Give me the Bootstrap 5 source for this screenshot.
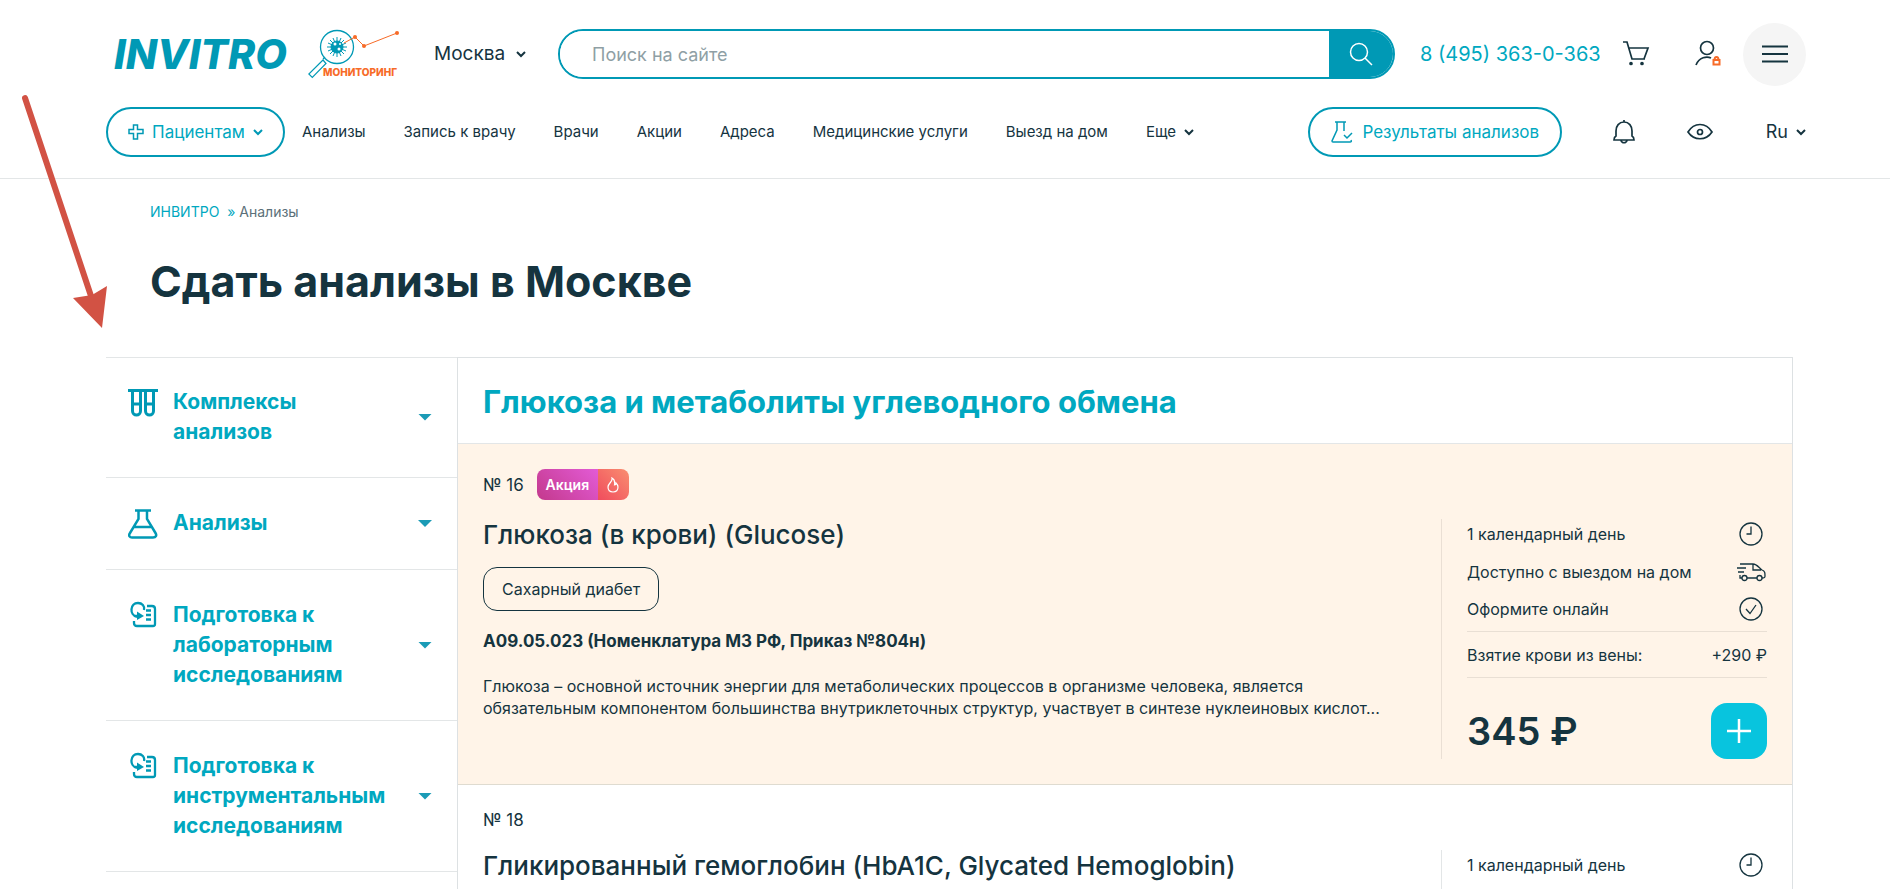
<!DOCTYPE html>
<html lang="ru">
<head>
<meta charset="utf-8">
<meta name="viewport" content="width=device-width, initial-scale=1">
<title>Сдать анализы в Москве</title>
<link rel="stylesheet" href="https://cdn.jsdelivr.net/npm/bootstrap@5.3.0/dist/css/bootstrap.min.css">
<style>
:root{--ink:#15343f;--teal:#00a8c0;--deep:#0099b5;--line:#e3e6e7}
body{font-family:Inter,"Liberation Sans",sans-serif;font-size:16px;line-height:22px;color:var(--ink);background:#fff}
a{color:inherit;text-decoration:none}
button{color:inherit}
svg{display:block;flex:none;fill:none;stroke:currentColor}
.teal{color:var(--teal)}
.page-header{padding:22px 84px 20px 106px;border-bottom:1px solid var(--line)}
.top-row{height:64px}
.menu-row{height:52px;margin-top:20px;font-size:15px}
.logo-word{font-size:41px;line-height:42px;font-weight:800;font-style:italic;color:var(--deep);width:180px;margin-left:8px;white-space:nowrap}
.monitoring{margin-left:14px}
.monitoring text{font-size:10px;font-weight:800;fill:#f76b28;stroke:none}
.city{font-size:19px;margin-left:30px;width:92px}
.search{height:50px;border:2px solid var(--deep);border-radius:25px;overflow:hidden;margin-left:32px}
.search input{border:0;padding:0 32px;font-size:18px;color:var(--ink);border-radius:0;box-shadow:none}
.search input::placeholder{color:#8f9fa5}
.search button{width:64px;border:0;background:var(--deep);color:#fff}
.phone{font-size:20px;margin-left:25px;width:178px;white-space:nowrap}
.plain-btn{border:0;background:none;padding:0}
.account{margin:0 21px 0 44px}
.burger{width:63px;height:63px;border-radius:50%;background:#f5f5f5;color:var(--ink)}
.pill{height:50px;border:2px solid var(--deep);border-radius:25px;background:#fff;color:var(--teal);font-size:17px;white-space:nowrap}
.pill svg{color:var(--deep)}
.for-patients{width:179px}
.results{width:254px}
.menu-links{gap:38px;margin-left:17px;white-space:nowrap}
.lang{font-size:18px;margin-left:52px}
.crumbs{font-size:14px;padding:22px 0 0 150px;color:#5b7079}
.page-title{font-size:43px;line-height:56px;font-weight:700;margin:30px 0 48px 150px}
.catalog{display:grid;grid-template-columns:351px minmax(0,1fr);margin:0 97px 0 106px}
.side-link{display:flex;align-items:flex-start;border-top:1px solid var(--line);padding:30px 25px 30px 22px;font-size:21px;line-height:30px;font-weight:700;color:var(--teal)}
.side-link:first-child{padding-top:29px}
.side-link:last-child{border-bottom:1px solid var(--line)}
.side-link svg{color:var(--deep);margin-top:1px}
.side-link span{width:220px;margin-left:15px}
.tri{align-self:center;margin-left:auto;width:14px;height:7px;background:#1b9bb6;clip-path:polygon(0 0,100% 0,50% 100%)}
.panel{border:1px solid #dde1e3;border-bottom:0}
.panel-title{font-size:31px;line-height:40px;font-weight:700;color:var(--teal);padding:24px 25px 21px;margin:0;border-bottom:1px solid var(--line)}
.test-row{padding:25px;border-bottom:1px solid #dfdbd0}
.promo{background:#fff4e8}
.num-line{font-size:17px}
.tag{height:31px;border-radius:8px;overflow:hidden;color:#fff;font-size:14px;font-weight:600;margin-left:13px}
.tag span{background:linear-gradient(45deg,#c3398c,#e35bd6);width:61px}
.tag i{background:linear-gradient(45deg,#f04c5d,#f98e70);width:31px}
.test-body{display:grid;grid-template-columns:minmax(0,1fr) 326px;margin-top:19px;column-gap:32px}
.test-name{font-size:26px;line-height:32px;font-weight:500;margin:0}
.chip{height:44px;border:1px solid var(--ink);border-radius:14px;background:none;padding:0 18px;font-size:16px;margin-top:16px}
.code{font-size:17px;font-weight:700;margin:19px 0 23px}
.descr{margin:0}
.facts{border-left:1px solid #eadfd4;padding-left:25px;min-height:240px}
.fact{height:37px}
.facts .fact:first-child{height:30px;margin-bottom:4px}
.sampling{height:47px;border-top:1px solid #e9dfd4;border-bottom:1px solid #e9dfd4;margin-top:4px}
.buy-line{margin-top:25px}
.price{font-size:38px;line-height:56px;font-weight:600}
.add{width:56px;height:56px;border:0;border-radius:16px;background:#08c4de;color:#fff}
.plain{border-bottom:0;padding-top:24px;padding-bottom:0}
.plain .facts{border-color:var(--line);min-height:56px}
.pointer{position:absolute;left:0;top:80px;pointer-events:none}
.pointer .head{stroke:none}
</style>
</head>
<body>
<header class="page-header">
  <div class="top-row d-flex align-items-center">
    <a href="#" class="logo-word">INVITRO</a>
    <a href="#" class="monitoring" aria-label="Мониторинг">
      <svg width="96" height="50" viewBox="0 0 96 50">
        <g stroke="#0099b5"><circle cx="29" cy="18" r="16.500" stroke-width="1.300"/><path d="M15 31L.800 45l3.500 3.500L18 34.500zM17 28l-2 2" stroke-width="1.200"/><circle cx="29" cy="18" r="6" fill="#0099b5"/><path d="M29 8v20M19 18h20M22 11l14 14M36 11L22 25M25 9l8 18M33 9l-8 18M20 14l18 8M38 14l-18 8" stroke-width="1"/></g>
        <g fill="#fff" stroke="none"><circle cx="27" cy="15" r="1.500"/><circle cx="31" cy="20" r="1.500"/><circle cx="32" cy="15" r="1"/></g>
        <path d="M36 14l11-6 9 9 33-13" stroke="#f76b28"/><g fill="#f76b28" stroke="none"><circle cx="47" cy="8" r="2"/><circle cx="56" cy="17" r="2"/><circle cx="89" cy="4" r="2"/></g>
        <text x="15" y="47">МОНИТОРИНГ</text>
      </svg>
    </a>
    <button class="plain-btn city d-flex align-items-center justify-content-between">Москва
      <svg width="10" height="7" viewBox="0 0 10 7" stroke-width="2"><path d="M1 1l4 4 4-4"/></svg></button>
    <form class="search d-flex flex-grow-1" role="search">
      <input class="form-control h-100" type="search" placeholder="Поиск на сайте" aria-label="Поиск на сайте">
      <button type="button" class="d-flex align-items-center justify-content-center flex-shrink-0" aria-label="Найти"><svg width="24" height="24" viewBox="0 0 24 24" stroke-width="1.500"><circle cx="10" cy="10" r="8.500"/><path d="M16 16l7 7"/></svg></button>
    </form>
    <a href="tel:84953630363" class="phone teal">8 (495) 363-0-363</a>
    <button class="plain-btn ms-4" aria-label="Корзина"><svg width="28" height="28" viewBox="0 0 28 28" stroke-width="1.700"><path d="M1 2h4l5 17h13M6 8h20l-4 11"/><circle cx="9" cy="23.500" r="1" fill="currentColor"/><circle cx="20" cy="23.500" r="1" fill="currentColor"/></svg></button>
    <button class="plain-btn account" aria-label="Личный кабинет"><svg width="28" height="28" viewBox="0 0 28 28" stroke-width="1.700"><circle cx="13" cy="8" r="6.500"/><path d="M2 25c3-8 11-9 15-7"/><g stroke="#f76b28" stroke-width="2"><rect x="19.500" y="20" width="6" height="4.500"/><path d="M20.500 20c0-4 4-4 4 0"/></g></svg></button>
    <button class="plain-btn burger d-flex align-items-center justify-content-center" aria-label="Меню"><svg width="28" height="18" viewBox="0 0 28 18" stroke-width="2"><path d="M1 1.500h26M1 9h26M1 16.500h26"/></svg></button>
  </div>
  <div class="menu-row d-flex align-items-center">
    <button class="pill for-patients d-flex align-items-center justify-content-center gap-2">
      <svg width="16" height="16" viewBox="0 0 16 16" stroke-width="1.500"><path d="M5.500 1h4v4.500H15v4H9.500V15h-4V9.500H1v-4h4.500z"/></svg>Пациентам
      <svg width="10" height="7" viewBox="0 0 10 7" stroke-width="2"><path d="M1 1l4 4 4-4"/></svg></button>
    <nav class="menu-links d-flex align-items-center">
      <a href="#">Анализы</a><a href="#">Запись к врачу</a><a href="#">Врачи</a><a href="#">Акции</a><a href="#">Адреса</a><a href="#">Медицинские услуги</a><a href="#">Выезд на дом</a>
      <a href="#" class="d-flex align-items-center gap-2">Еще <svg width="10" height="7" viewBox="0 0 10 7" stroke-width="2"><path d="M1 1l4 4 4-4"/></svg></a>
    </nav>
    <a href="#" class="pill results ms-auto d-flex align-items-center justify-content-center gap-2">
      <svg width="24" height="24" viewBox="0 0 24 24" stroke-width="1.500"><path d="M5 2h11M7 2v8L2 21q0 1 1 1h17q2 0 1-2M14 2v9M14 15l3 3 5-5"/></svg>Результаты анализов</a>
    <button class="plain-btn ms-5" aria-label="Уведомления"><svg width="28" height="26" viewBox="0 0 28 26" stroke-width="1.700"><path d="M14 1v2M6 12c0-5 3-9 8-9s8 4 8 9v5q2 1 2 4H4q0-3 2-4zM11 21.500c1 3 5 3 6 0"/></svg></button>
    <button class="plain-btn ms-5" aria-label="Версия для слабовидящих"><svg width="28" height="20" viewBox="0 0 28 20" stroke-width="1.700"><path d="M2 10C8 0 20 0 26 10 20 19 8 19 2 10z"/><circle cx="14" cy="10" r="2.500"/></svg></button>
    <button class="plain-btn lang d-flex align-items-center gap-2">Ru <svg width="10" height="7" viewBox="0 0 10 7" stroke-width="2"><path d="M1 1l4 4 4-4"/></svg></button>
  </div>
</header>
<main>
  <nav class="crumbs" aria-label="Навигация"><a href="#" class="teal">ИНВИТРО</a>&nbsp; <span class="teal">»</span> Анализы</nav>
  <h1 class="page-title">Сдать анализы в Москве</h1>
  <div class="catalog">
    <nav>
      <a href="#" class="side-link"><svg width="30" height="30" viewBox="0 0 30 30" stroke-width="3"><path d="M0 2.500h30M4.500 2v21a4 4 0 0 0 8 0V2M17.500 2v21a4 4 0 0 0 8 0V2M5 16h8M18 16h8"/></svg><span>Комплексы анализов</span><b class="tri"></b></a>
      <a href="#" class="side-link"><svg width="30" height="30" viewBox="0 0 30 30" stroke-width="2.500"><path d="M7 1.500h16M10.500 2v8L2 24c-2 3 0 4.500 2 4.500h21c3 0 4-2 2.500-4.500L19 10V2M6 18h18"/></svg><span>Анализы</span><b class="tri"></b></a>
      <a href="#" class="side-link"><svg width="30" height="30" viewBox="0 0 30 30" stroke-width="2.300"><path d="M9 16C1 14 2 2 10 2c4 0 7 3 6 7M19 5h5q3 0 3 3v15q0 2-2 2H9q-3 0-3-3v-2M7 15h5M18 9.500h5M18 14h5M18 18.500h5"/><path d="M9 10.500l7 4.500-7 4z" fill="currentColor" stroke="none"/></svg><span>Подготовка к лабораторным исследованиям</span><b class="tri"></b></a>
      <a href="#" class="side-link"><svg width="30" height="30" viewBox="0 0 30 30" stroke-width="2.300"><path d="M9 16C1 14 2 2 10 2c4 0 7 3 6 7M19 5h5q3 0 3 3v15q0 2-2 2H9q-3 0-3-3v-2M7 15h5M18 9.500h5M18 14h5M18 18.500h5"/><path d="M9 10.500l7 4.500-7 4z" fill="currentColor" stroke="none"/></svg><span>Подготовка к инструментальным исследованиям</span><b class="tri"></b></a>
    </nav>
    <section class="panel">
      <h2 class="panel-title">Глюкоза и метаболиты углеводного обмена</h2>
      <article class="test-row promo">
        <div class="num-line d-flex align-items-center">№ 16
          <div class="tag d-flex"><span class="d-flex align-items-center justify-content-center">Акция</span><i class="d-flex align-items-center justify-content-center"><svg width="12" height="16" viewBox="0 0 12 16" stroke-width="1.200"><path d="M5 1c1 4-4 5-4 9 0 3 2 5 5 5s5-2 5-5c0-2-1-3-2-4 0 1-.5 2-1.500 2C8 5 7 2 5 1z"/></svg></i></div>
        </div>
        <div class="test-body">
          <div>
            <h3 class="test-name"><a href="#">Глюкоза (в крови) (Glucose)</a></h3>
            <button class="chip">Сахарный диабет</button>
            <p class="code">A09.05.023 (Номенклатура МЗ РФ, Приказ №804н)</p>
            <p class="descr">Глюкоза – основной источник энергии для метаболических процессов в организме человека, является<br>обязательным компонентом большинства внутриклеточных структур, участвует в синтезе нуклеиновых кислот...</p>
          </div>
          <div class="facts">
            <div class="fact d-flex align-items-center justify-content-between">1 календарный день<svg class="me-1" width="24" height="24" viewBox="0 0 24 24" stroke-width="1.300"><circle cx="12" cy="12" r="11"/><path d="M12 4.500V12H7.500"/></svg></div>
            <div class="fact d-flex align-items-center justify-content-between">Доступно с выездом на дом<svg width="31" height="20" viewBox="0 0 31 20" stroke-width="1.300"><path d="M4 2h13c4 0 6 4 9 6 3 1 3 3 3 6 0 2-1 2-3 2M21 16H11M6 16H4v-3M1 6h9M2 10h6M17 2v6h8"/><circle cx="8.500" cy="16" r="2.500"/><circle cx="23.500" cy="16" r="2.500"/></svg></div>
            <div class="fact d-flex align-items-center justify-content-between">Оформите онлайн<svg class="me-1" width="24" height="24" viewBox="0 0 24 24" stroke-width="1.300"><circle cx="12" cy="12" r="11"/><path d="M7 12l4 4.500 6-8.500"/></svg></div>
            <div class="sampling d-flex align-items-center justify-content-between"><span>Взятие крови из вены:</span><span>+290 ₽</span></div>
            <div class="buy-line d-flex align-items-center justify-content-between"><span class="price">345 ₽</span><button class="add d-flex align-items-center justify-content-center" aria-label="Добавить в корзину"><svg width="26" height="26" viewBox="0 0 26 26" stroke-width="2.500"><path d="M13 1v24M1 13h24"/></svg></button></div>
          </div>
        </div>
      </article>
      <article class="test-row plain">
        <div class="num-line">№ 18</div>
        <div class="test-body">
          <h3 class="test-name"><a href="#">Гликированный гемоглобин (HbA1C, Glycated Hemoglobin)</a></h3>
          <div class="facts"><div class="fact d-flex align-items-center justify-content-between">1 календарный день<svg class="me-1" width="24" height="24" viewBox="0 0 24 24" stroke-width="1.300"><circle cx="12" cy="12" r="11"/><path d="M12 4.500V12H7.500"/></svg></div></div>
        </div>
      </article>
    </section>
  </div>
</main>
<svg class="pointer" width="120" height="260" viewBox="0 0 120 260" aria-hidden="true"><path d="M25 18L91 216" stroke="#d25244" stroke-width="6" stroke-linecap="round"/><path class="head" d="M73 218L92 215 107 206 102 248z" fill="#d25244"/></svg>
<script src="https://cdn.jsdelivr.net/npm/bootstrap@5.3.0/dist/js/bootstrap.bundle.min.js"></script>
</body>
</html>
